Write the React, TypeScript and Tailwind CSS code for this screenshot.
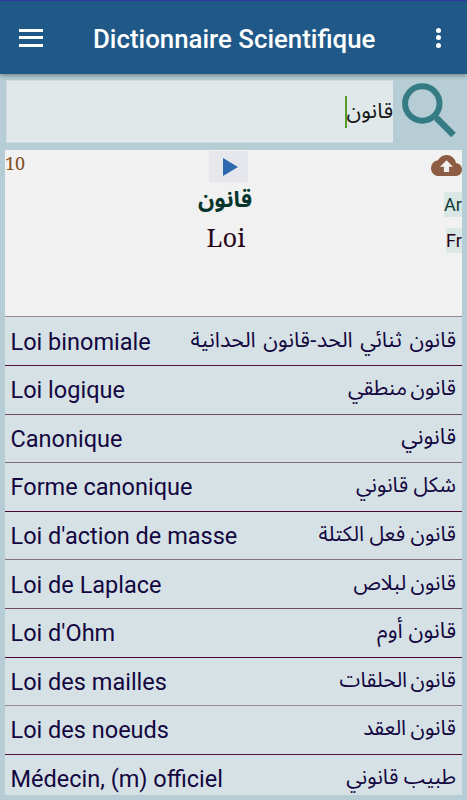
import { useState } from "react";

interface Entry {
  fr: string;
  ar: string;
  line: string;
  spacing: string;
}

const ENTRIES: Entry[] = [
  { fr: "Loi binomiale", ar: "قانون ثنائي الحد-قانون الحدانية", line: "border-[#978a98]", spacing: "text-[21.5px] [word-spacing:2px]" },
  { fr: "Loi logique", ar: "قانون منطقي", line: "border-[#510f3c]", spacing: "text-[21px] [word-spacing:-2px]" },
  { fr: "Canonique", ar: "قانوني", line: "border-[#714a66]", spacing: "text-[22px]" },
  { fr: "Forme canonique", ar: "شكل قانوني", line: "border-[#85697d]", spacing: "text-[21px]" },
  { fr: "Loi d'action de masse", ar: "قانون فعل الكتلة", line: "border-[#4b0835]", spacing: "text-[21px]" },
  { fr: "Loi de Laplace", ar: "قانون لبلاص", line: "border-[#86707f]", spacing: "text-[21px] [word-spacing:-1px]" },
  { fr: "Loi d'Ohm", ar: "قانون أوم", line: "border-[#714a66]", spacing: "text-[22px]" },
  { fr: "Loi des mailles", ar: "قانون الحلقات", line: "border-[#4b0835]", spacing: "text-[21px] [word-spacing:-2px]" },
  { fr: "Loi des noeuds", ar: "قانون العقد", line: "border-[#978a98]", spacing: "text-[21px] [word-spacing:-1px]" },
  { fr: "Médecin, (m) officiel", ar: "طبيب قانوني", line: "border-[#510f3c]", spacing: "text-[21px]" },
];

const arabicFont = "font-['Noto_Sans_Arabic','DejaVu_Sans',sans-serif]";

function Header() {
  return (
    <header className="relative z-10 flex h-[74px] shrink-0 items-center border-t border-[#3038a0] bg-[#205988] pl-[19px] pr-[26px] text-white shadow-[0_1px_5px_rgba(0,0,0,0.45)]">
      <button aria-label="Menu" className="flex w-[24px] flex-col gap-[4.5px]">
        <span className="h-[3px] bg-white" />
        <span className="h-[3px] bg-white" />
        <span className="h-[3px] bg-white" />
      </button>
      <h1 className="ml-[50px] mt-[3px] flex-1 whitespace-nowrap text-[25.85px] font-medium leading-8">Dictionnaire Scientifique</h1>
      <button aria-label="Options" className="flex flex-col gap-[2.5px]">
        <span className="size-[5px] rounded-full bg-white" />
        <span className="size-[5px] rounded-full bg-white" />
        <span className="size-[5px] rounded-full bg-white" />
      </button>
    </header>
  );
}

function SearchBar({ query, onChange }: { query: string; onChange: (q: string) => void }) {
  return (
    <div className="flex h-[76.4px] shrink-0 pl-[6px] pt-[6px]">
      <label className="flex h-[63px] w-[387px] items-center justify-end border border-r-0 border-[#d0dcdf] bg-[#e0e8ea]">
        <span className="h-[32px] w-[2px] shrink-0 bg-[#589b28]" />
        <input
          dir="rtl"
          value={query}
          onChange={(e) => onChange(e.target.value)}
          className={`w-[46px] bg-transparent text-[21.5px] text-[#151515] outline-none ${arabicFont}`}
        />
      </label>
      <svg className="ml-[8px] mt-[2px]" width="56" height="56" viewBox="0 0 56 56" fill="none" stroke="#357b84">
        <circle cx="21.3" cy="21.5" r="17.2" strokeWidth="6" />
        <path d="M34 34L37 37" strokeWidth="4" />
        <path d="M35.5 36L52.5 53" strokeWidth="6.5" />
      </svg>
    </div>
  );
}

function Definition() {
  return (
    <section className="flex h-[166px] shrink-0 bg-[#f1f1f1]">
      <div className="w-[120px] pt-[1px] font-['Noto_Serif','DejaVu_Serif_Condensed','DejaVu_Serif',serif] text-[18px] leading-6 text-[#82501f]">10</div>
      <div className="flex flex-1 flex-col items-center pr-[21px]">
        <button aria-label="Écouter" className="mt-[1px] flex h-[31px] w-[39px] items-center justify-center bg-[#e5e7ed]">
          <svg className="ml-[3px]" width="15" height="18" viewBox="0 0 15 18" fill="#2d69ae">
            <path d="M0 0L15 9L0 18Z" />
          </svg>
        </button>
        <div dir="rtl" className={`mr-[7px] text-[22.5px] font-bold leading-[36px] text-[#05352d] ${arabicFont}`}>قانون</div>
        <div className="mr-[5px] font-['Noto_Serif','DejaVu_Serif_Condensed','DejaVu_Serif',serif] text-[25.5px] leading-[39px] text-[#280519]">Loi</div>
      </div>
      <div className="flex w-[109px] flex-col items-end">
        <svg className="mt-[5px] shrink-0" width="31" height="21" viewBox="0 4 24 16" preserveAspectRatio="none" fill="#8c5d42">
          <path d="M19.35 10.04A7.49 7.49 0 0 0 12 4C9.11 4 6.6 5.64 5.35 8.04A5.99 5.99 0 0 0 0 14c0 3.31 2.69 6 6 6h13c2.76 0 5-2.24 5-5 0-2.64-2.05-4.78-4.65-4.96zM14 13v4h-4v-4H7l5-5 5 5h-3z" />
        </svg>
        <span className="mt-[15.5px] h-[25px] w-[18px] whitespace-nowrap bg-[#d9e7e5] text-[18px] leading-[26px] text-[#103a35]">Ar</span>
        <span className="mt-[11px] h-[25px] w-[16px] whitespace-nowrap bg-[#d9e7e5] text-[18px] leading-[26px] text-[#280519]">Fr</span>
      </div>
    </section>
  );
}

export default function App() {
  const [query, setQuery] = useState("قانون");

  return (
    <div className="flex h-[800px] w-[467px] flex-col overflow-hidden bg-[#b6cdd5] font-[Roboto,sans-serif]">
      <Header />
      <SearchBar query={query} onChange={setQuery} />
      <main className="mx-[5px] mb-[5px] flex min-h-0 flex-1 flex-col overflow-hidden">
        <Definition />
        <ul className="bg-[#d6e1e6] text-[#130740]">
          {ENTRIES.map((entry) => (
            <li key={entry.fr} className={`flex h-[48.6px] items-center justify-between whitespace-nowrap border-t pl-[5.5px] pr-[6px] ${entry.line}`}>
              <span className="mt-[1px] text-[23.5px] leading-8">{entry.fr}</span>
              <span dir="rtl" className={`mb-[3px] leading-8 ${arabicFont} ${entry.spacing}`}>{entry.ar}</span>
            </li>
          ))}
        </ul>
      </main>
    </div>
  );
}
